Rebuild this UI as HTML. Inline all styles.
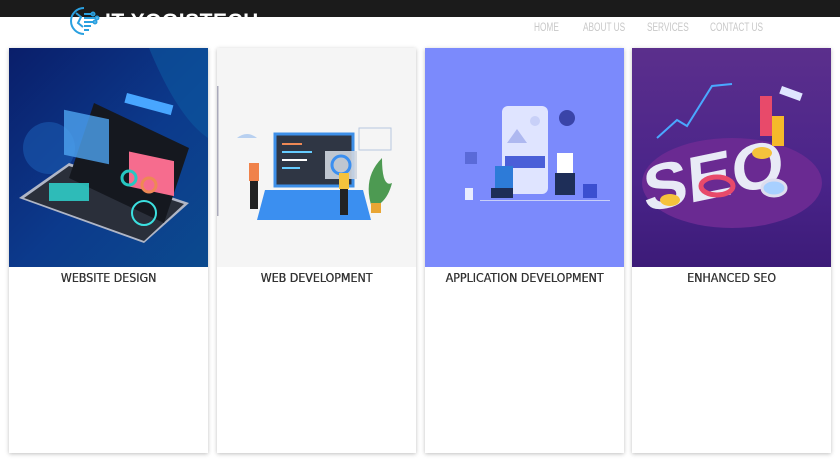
<!DOCTYPE html>
<html><head><meta charset="utf-8"><style>
*{margin:0;padding:0;box-sizing:border-box}
body{width:840px;height:472px;background:#fff;font-family:"Liberation Sans",sans-serif;position:relative;overflow:hidden}
.top{position:absolute;left:0;top:0;width:840px;height:17px;background:#1b1b1b;overflow:hidden}
.logo{position:absolute;left:105px;top:10px;color:#fff;font-weight:bold;font-size:21px;letter-spacing:0.5px}
.nav{position:absolute;top:22px;font-size:11.5px;color:#c8c8c8;transform:scaleX(.72);transform-origin:left top;white-space:nowrap}
.card{position:absolute;top:48px;width:199px;height:405px;background:#fff;box-shadow:0 1px 4px rgba(0,0,0,.25)}
.img{width:199px;height:219px;position:relative;overflow:hidden}
.t{text-align:center;font-size:12.3px;color:#333;margin-top:4px;font-family:"DejaVu Sans Condensed","Liberation Sans",sans-serif;text-shadow:0.3px 0 0 #333}
</style></head><body>
<div class="top"><div class="logo">IT YOGISTECH</div></div>
<svg style="position:absolute;left:68px;top:5px" width="32" height="32" viewBox="0 0 32 32" fill="none" stroke="#2aa0e0" stroke-width="2">
<path d="M16 3a13 13 0 1 0 0 26"/><path d="M8 8l5 4-3 6 5 4"/><path d="M16 9h8M16 13h12M16 17h10M16 21h7M16 25h5"/><circle cx="25" cy="9" r="1.5"/><circle cx="29" cy="13" r="1.5"/><circle cx="27" cy="17" r="1.5"/></svg>
<div class="nav" style="left:534px">HOME</div>
<div class="nav" style="left:583px">ABOUT US</div>
<div class="nav" style="left:647px">SERVICES</div>
<div class="nav" style="left:710px">CONTACT US</div>

<div class="card" style="left:9px"><div class="img" style="background:linear-gradient(135deg,#0a1e6a 0%,#0c3a8c 55%,#0b4a8e 100%)">
<svg width="199" height="219"><path d="M140 0h59v90q-30-20-59-90z" fill="#0e58a0" opacity=".6"/>
<circle cx="40" cy="100" r="26" fill="#1a5ab0" opacity=".6"/>
<path d="M10 150l125 45 45-40-120-40z" fill="#b0b6c6"/><path d="M15 150l120 43 40-37-115-38z" fill="#2a2f3a"/>
<path d="M85 55l95 45-25 75-95-45z" fill="#15181f"/>
<rect x="55" y="50" width="45" height="45" fill="#4ea4f0" opacity=".8" transform="skewY(12)"/>
<rect x="120" y="78" width="45" height="35" fill="#f66c8e" transform="skewY(12)"/>
<circle cx="120" cy="130" r="7" fill="none" stroke="#26c7c2" stroke-width="3"/><circle cx="140" cy="137" r="7" fill="none" stroke="#e85" stroke-width="3"/>
<rect x="40" y="135" width="40" height="18" fill="#2fd3cf" opacity=".85"/>
<rect x="118" y="45" width="48" height="10" fill="#48a6ff" transform="rotate(15 118 45)"/>
<circle cx="135" cy="165" r="12" fill="none" stroke="#3ce0e0" stroke-width="2"/></svg></div>
<div class="t">WEBSITE DESIGN</div></div>

<div class="card" style="left:217px"><div class="img" style="background:#f5f5f5">
<svg width="199" height="219"><rect x="0" y="38" width="1.5" height="130" fill="#aab"/>
<path d="M58 86h78v52H58z" fill="#2f3644" stroke="#3d8fe8" stroke-width="3"/>
<path d="M48 142h98l8 30H40z" fill="#3b8ff0"/>
<g fill="#e85" ><rect x="65" y="95" width="20" height="2"/><rect x="65" y="103" width="30" height="2" fill="#6cf"/><rect x="65" y="111" width="25" height="2" fill="#fff"/><rect x="65" y="119" width="18" height="2" fill="#6cf"/></g>
<rect x="108" y="103" width="32" height="28" fill="#cfd6e0" opacity=".9"/><circle cx="124" cy="117" r="9" fill="none" stroke="#3b8ff0" stroke-width="3"/>
<rect x="32" y="115" width="10" height="18" fill="#f0824a"/><rect x="33" y="133" width="8" height="28" fill="#222"/>
<rect x="122" y="125" width="10" height="16" fill="#f5c23c"/><rect x="123" y="141" width="8" height="26" fill="#222"/>
<path d="M155 160q-10-30 10-50q0 30 10 25q-5 20-20 25z" fill="#4d9a52"/><rect x="154" y="155" width="10" height="10" fill="#e9a635"/>
<rect x="142" y="80" width="32" height="22" fill="none" stroke="#b8c8e0"/><path d="M20 90q10-8 20 0z" fill="#b8d0f0"/></svg></div>
<div class="t">WEB DEVELOPMENT</div></div>

<div class="card" style="left:425px"><div class="img" style="background:#7b8afc">
<svg width="199" height="219"><rect x="77" y="58" width="46" height="88" rx="6" fill="#dfe4ff"/>
<path d="M82 95l10-14 10 14z" fill="#aeb8f0"/><circle cx="110" cy="73" r="5" fill="#c8d0f8"/>
<rect x="80" y="108" width="40" height="12" fill="#4a5fd8"/>
<circle cx="142" cy="70" r="8" fill="#3a44a8"/>
<path d="M70 118h18v22H70z" fill="#2d7bd8"/><rect x="66" y="140" width="22" height="10" fill="#1e2e58"/>
<rect x="132" y="105" width="16" height="20" fill="#fff"/><rect x="130" y="125" width="20" height="22" fill="#1e2e58"/>
<rect x="55" y="152" width="130" height="1" fill="#c8cff8"/><rect x="40" y="140" width="8" height="12" fill="#e8ecff"/>
<rect x="40" y="104" width="12" height="12" fill="#5a6ad8"/><rect x="158" y="136" width="14" height="14" fill="#3b4fd0"/></svg></div>
<div class="t">APPLICATION DEVELOPMENT</div></div>

<div class="card" style="left:632px"><div class="img" style="background:linear-gradient(180deg,#5b2f8c 0%,#4a248a 60%,#3c1b78 100%)">
<svg width="199" height="219"><ellipse cx="100" cy="135" rx="90" ry="45" fill="#6a2a92"/>
<text x="28" y="150" font-family="Liberation Sans" font-weight="bold" font-size="66" fill="#e8eaf6" transform="skewX(-8) rotate(-12 100 120)">SEO</text>
<rect x="128" y="48" width="12" height="40" fill="#e84a6a"/><rect x="140" y="68" width="12" height="30" fill="#f5b92a"/>
<path d="M25 90l20-18 10 6 25-40 20-2" stroke="#4aa8ff" stroke-width="2" fill="none"/>
<ellipse cx="38" cy="152" rx="10" ry="6" fill="#f5c23c"/><ellipse cx="130" cy="105" rx="10" ry="6" fill="#f5c23c"/>
<ellipse cx="85" cy="138" rx="16" ry="9" fill="none" stroke="#e84a6a" stroke-width="5"/>
<ellipse cx="142" cy="140" rx="12" ry="8" fill="#a8d0ff" stroke="#dde" stroke-width="3"/>
<rect x="150" y="38" width="22" height="8" fill="#dfe6ff" transform="rotate(20 150 38)"/></svg></div>
<div class="t">ENHANCED SEO</div></div>
</body></html>
